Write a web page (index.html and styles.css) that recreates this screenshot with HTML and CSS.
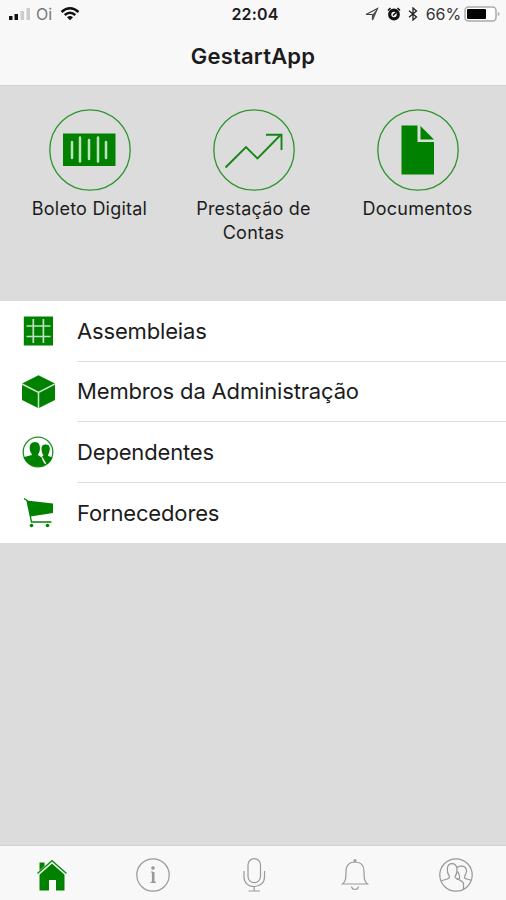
FILE: index.html
```html
<!DOCTYPE html>
<html lang="pt-BR">
<head>
<meta charset="utf-8">
<title>GestartApp</title>
<link rel="stylesheet" href="styles.css">
</head>
<body>
<div class="app">
  <header class="header">
    <div class="status">
      <div class="status-left">
        <svg class="signal" width="24" height="14" viewBox="0 0 24 14"><path d="M1 9h3.500v4H1zM6.500 7H10v6H6.500z" fill="#111"/><path d="M12.500 4H16v9h-3.500zM18.500 1H22v12h-3.500z" fill="#ccc"/></svg>
        <span class="carrier">Oi</span>
        <svg width="20" height="14" viewBox="0 0 20 14" fill="none" stroke="#111" stroke-width="2.400"><path d="M1.500 5Q10-2.500 18.500 5M4.700 8Q10 3.300 15.300 8"/><path d="M7 10.300Q10 7.800 13 10.300L10 13.300Z" fill="#111" stroke="none"/></svg>
      </div>
      <span class="clock">22:04</span>
      <div class="status-right">
        <svg width="14" height="14" viewBox="0 0 14 14"><path d="M1 7.500 12.500 1.500 7.500 13V7.500Z" fill="none" stroke="#444" stroke-width="1.200"/><path d="M7.500 7.500 12.500 1.500 7.500 13Z" fill="#555"/></svg>
        <svg class="alarm" width="14" height="14" viewBox="0 0 14 14"><circle cx="7" cy="7.500" r="4.300" fill="none" stroke="#111" stroke-width="3.200"/><path d="M1 3.500 3.500 1M10.500 1 13 3.500M6 8.500 9 5.500" stroke="#111" stroke-width="1.600"/></svg>
        <svg class="bluetooth" width="10" height="14" viewBox="0 0 10 14"><path d="M1 3.700 8.500 10 5 13V1l3.500 3L1 10.300" fill="none" stroke="#222" stroke-width="1.300"/></svg>
        <span class="percent">66%</span>
        <svg width="36" height="16" viewBox="0 0 36 16"><rect x="1" y="1" width="31" height="14" rx="3.500" fill="#fff" stroke="#aaa" stroke-width="1.500"/><rect x="3" y="3" width="19" height="10" rx="1" fill="#050505"/><path d="M34.500 6.500v3" stroke="#aaa" stroke-width="1.500"/></svg>
      </div>
    </div>
    <h1 class="title">GestartApp</h1>
  </header>

  <main class="content">
    <nav class="actions">
      <a class="action">
        <svg width="82" height="82" viewBox="0 0 82 82"><circle class="ring" cx="41" cy="41" r="40.200"/><path d="M14 24.500H66.500V57H14Z" fill="#008200"/><path d="M23 33v16M31 28.500v24M40 31v19M49 28.500v24M57 33v16" fill="none" stroke="#bfe0bf" stroke-width="2.500" stroke-linecap="round"/></svg>
        <span class="action-label">Boleto Digital</span>
      </a>
      <a class="action">
        <svg width="82" height="82" viewBox="0 0 82 82"><circle class="ring" cx="41" cy="41" r="40.200"/><path d="M12.500 58.500 33 38 44.500 49.500 67.500 26M53 25.800H68.500V41" fill="none" stroke="#158515" stroke-width="1.900"/></svg>
        <span class="action-label">Prestação de Contas</span>
      </a>
      <a class="action">
        <svg width="82" height="82" viewBox="0 0 82 82"><circle class="ring" cx="41" cy="41" r="40.200"/><path d="M24.500 16.500H40.500V33H57V65.500H24.500ZM43.500 17 57 30.500H43.500Z" fill="#008200"/></svg>
        <span class="action-label">Documentos</span>
      </a>
    </nav>

    <ul class="list">
      <li class="row">
        <svg class="row-icon" width="34" height="34" viewBox="0 0 34 34"><path d="M2.800 2.500H32V31.500H2.800Z" fill="#008200"/><path d="M12.300 5v24M22.400 5v24M5.500 12h24M5.500 22.500h24" stroke="#bfe0bf" stroke-width="1.700"/></svg>
        <span class="row-label">Assembleias</span>
      </li>
      <li class="row">
        <svg class="row-icon" width="34" height="34" viewBox="0 0 34 34"><path d="M17.500 .300 34 8.500V25L17.500 33.300 1 25V8.500Z" fill="#008200"/><path d="M1 9 17.500 17.500 34 9M17.500 17.500V33.500" fill="none" stroke="#d0ead0" stroke-width="1.500"/></svg>
        <span class="row-label">Membros da Administração</span>
      </li>
      <li class="row">
        <svg class="row-icon" width="34" height="34" viewBox="0 0 34 34"><circle cx="17" cy="17" r="14.800" fill="#fff" stroke="#249024" stroke-width="1.300"/><path d="M2.800 22.500C6 20.500 11 21 11 19.500C7.500 15.500 7.500 7 14 7C20 7 20 15.500 17 19.500C17 21 20.500 21.500 21 23C21.500 27 23.500 27.500 24.500 30C15 34.500 6 30 2.800 22.500Z" fill="#008200"/><path d="M25.500 29.500C24.500 26 22.500 24 21 21.500C23.500 20.500 22 19.500 21 18C19.500 10 22 9.500 25 9.500C30 9.500 29.500 16 27 20C27 21.500 30 21.500 31.500 22.500C30.500 25.500 28 28.500 25.500 29.500Z" fill="#008200"/></svg>
        <span class="row-label">Dependentes</span>
      </li>
      <li class="row">
        <svg class="row-icon" width="34" height="34" viewBox="0 0 34 34"><path d="M3 2.500 6 4.500 10.500 26H30.500" fill="none" stroke="#008200" stroke-width="1.300"/><path d="M6 4.500 32 7.500V17L9.500 20.500Z" fill="#008200"/><circle cx="10.500" cy="29.500" r="1.800" fill="#008200"/><circle cx="26.500" cy="29.500" r="1.800" fill="#008200"/></svg>
        <span class="row-label">Fornecedores</span>
      </li>
    </ul>
  </main>

  <nav class="tabs">
    <a class="tab"><svg width="36" height="36" viewBox="0 0 36 36"><path d="M5.500 17.500 18 6.500 30.500 17.500V33.500H22V23H15V33.500H5.500Z" fill="#008200"/><path d="M5.500 5.500H10.500V9L5.500 13.500Z" fill="#008200"/><path d="M3.500 16.500 18 3.800 32.500 16.500" fill="none" stroke="#128812" stroke-width="1.500"/><path d="M4.500 17.500 18 5.800 31.500 17.500" fill="none" stroke="#d8edd8" stroke-width="1.200"/></svg></a>
    <a class="tab"><svg class="outline" width="36" height="36" viewBox="0 0 36 36"><circle cx="18" cy="18" r="16.200"/><path d="M18.200 15v10.500" stroke-width="2.600"/><path d="M15.800 15H18M15.500 25.300h5.400" stroke-width="1.200"/><circle cx="18" cy="11" r="1.200" fill="#999"/></svg></a>
    <a class="tab"><svg class="outline" width="36" height="36" viewBox="0 0 36 36"><rect x="12" y="1.700" width="12.500" height="24" rx="6.200"/><path d="M8 14v6C8 25.500 12 29.500 18.200 29.500S28.500 25.500 28.500 20V14M18.200 29.500V34M12.500 34h11.500"/></svg></a>
    <a class="tab"><svg class="outline" width="36" height="36" viewBox="0 0 36 36"><path d="M5.500 27C8.500 24.500 9 22 9 14.500C9 8 12.500 5 18 5S27 8 27 14.500C27 22 27.500 24.500 30.500 27ZM14.500 29.500C15 33.500 21 33.500 21.500 29.500"/><circle cx="18" cy="3.700" r="1"/></svg></a>
    <a class="tab"><svg class="outline" width="36" height="36" viewBox="0 0 36 36"><circle cx="18" cy="18" r="16.200"/><path d="M3 24C7 22 11.500 22.500 11.500 20C8 14 8.500 6.700 14 6.700S20.500 14 17 20C17 22 25 23 25.500 26.500V32M19 10.500C23 8 28.500 9 28.500 14C28.500 17 26 18.500 26.500 21C28 22.500 31 22 33 23.500M20 14.500C20 17 22.500 18 21.500 21.500C20 23 19 22 18.500 22.500"/></svg></a>
  </nav>
</div>
</body>
</html>
```

FILE: styles.css
```css
* { box-sizing: border-box; }
body { margin: 0; font-family: Inter, "Liberation Sans", sans-serif; color: #1c1c1c; }
svg { display: block; flex: none; }
.app { display: flex; flex-direction: column; width: 506px; height: 900px; overflow: hidden; background: #dcdcdc; }

.header { height: 86px; background: #f8f8f8; border-bottom: 1px solid #d0d0d0; }
.status { display: grid; grid-template-columns: 1fr auto 1fr; align-items: center; height: 28px; padding: 0 6px 0 8px; }
.status-left, .status-right { display: flex; align-items: center; }
.carrier { width: 16px; margin: 0 8px 0 4px; font-size: 16px; color: #777; }
.clock { padding-left: 2px; font-size: 16px; font-weight: 600; letter-spacing: 0.2px; }
.status-right { justify-content: flex-end; }
.alarm { margin-left: 8px; }
.bluetooth { margin: 0 8px 0 7px; }
.percent { margin-right: 3px; font-size: 16px; letter-spacing: -0.1px; color: #333; }
.title { margin: 13px 0 0; font-size: 22px; font-weight: 600; line-height: 30px; text-align: center; letter-spacing: 0.2px; }

.content { flex: 1; }
.actions { display: grid; grid-template-columns: repeat(3, 164px); justify-content: center; height: 215px; padding: 23px 0 0 1px; }
.action { display: flex; flex-direction: column; align-items: center; }
.ring { fill: none; stroke: #2e952e; stroke-width: 1.3; }
.action-label { width: 130px; margin-top: 6px; font-size: 18px; line-height: 24px; text-align: center; letter-spacing: 0.22px; }

.list { margin: 0; padding: 0; list-style: none; background: #fff; }
.row { display: grid; grid-template-columns: 77px 1fr; align-items: center; height: 60.6px; }
.row-icon { margin-left: 21px; }
.row-label { display: flex; align-items: center; height: 100%; border-bottom: 1px solid #dedede; font-size: 22px; letter-spacing: -0.16px; }
.row:last-child .row-label { border-bottom: 0; }

.tabs { display: grid; grid-template-columns: repeat(5, 1fr); height: 55px; padding-left: 1px; background: #f8f8f8; border-top: 1px solid #d2d2d2; }
.tab { display: flex; align-items: center; justify-content: center; padding-top: 3px; }
.outline { fill: none; stroke: #999; stroke-width: 1.2; }
```
